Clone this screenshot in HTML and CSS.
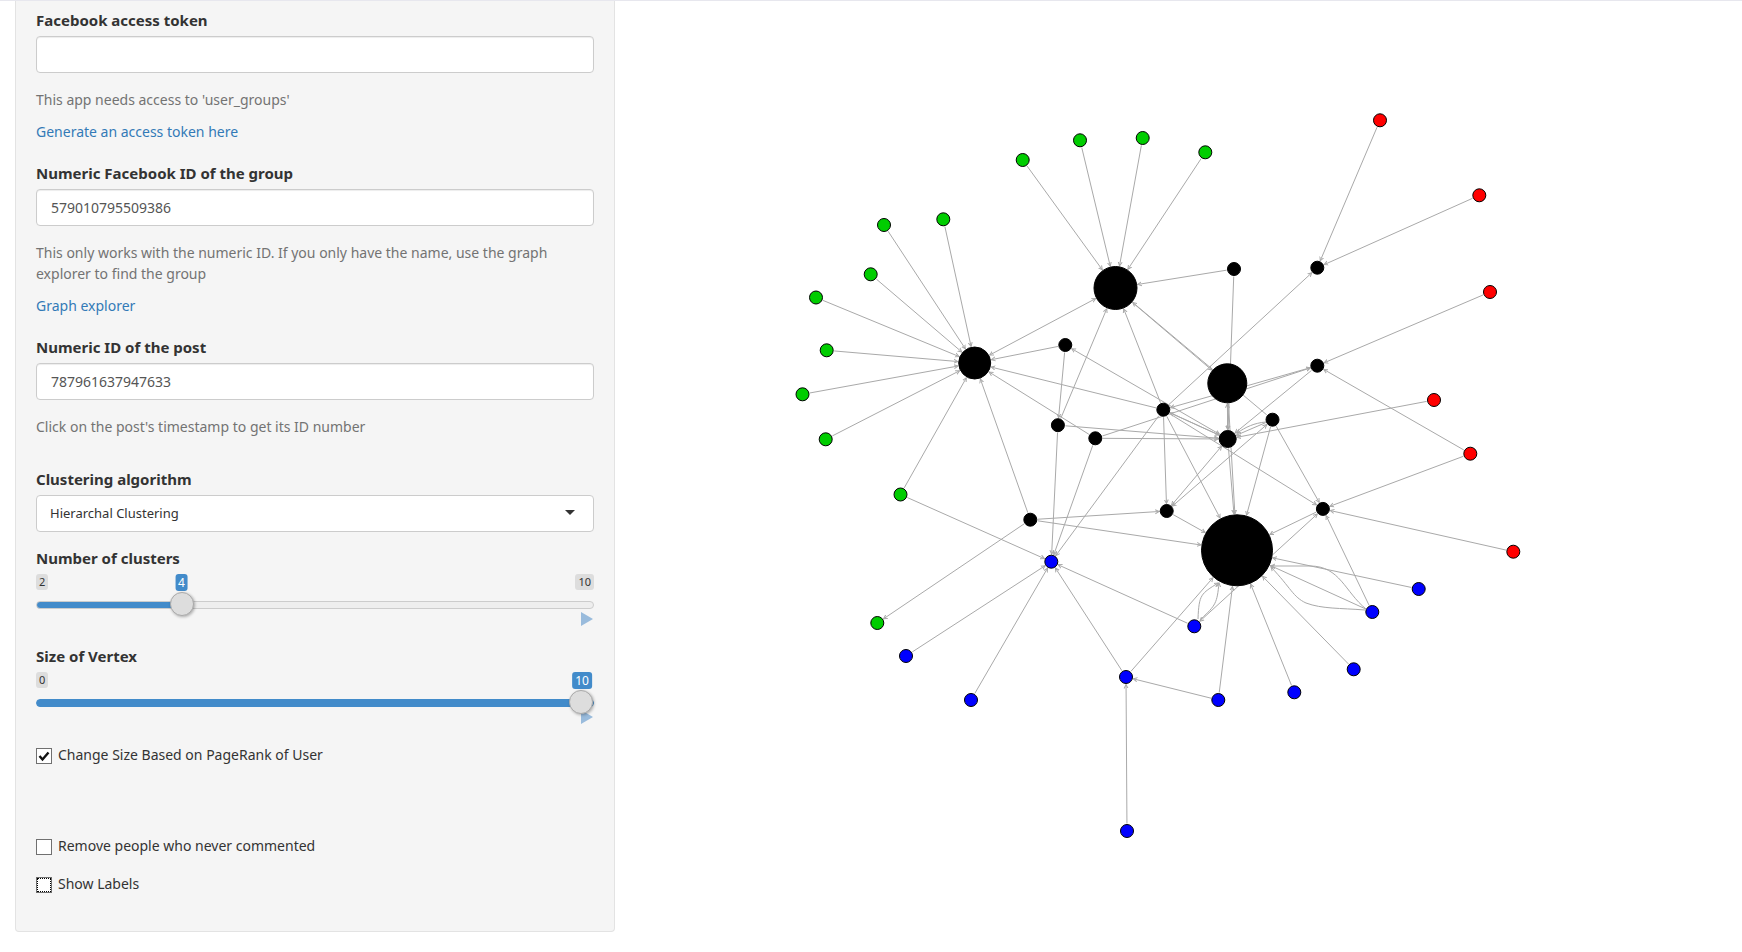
FILE: index.html
```html
<!DOCTYPE html>
<html lang="en">
<head>
<meta charset="utf-8">
<title>Facebook group network</title>
<link rel="stylesheet" href="styles.css">
</head>
<body>
<div class="layout">
  <div class="sidebar">
    <form class="panel">
      <div class="field">
        <label for="token">Facebook access token</label>
        <input class="textbox" type="text" id="token">
      </div>
      <p class="help">This app needs access to 'user_groups'</p>
      <p class="more"><a href="#token">Generate an access token here</a></p>

      <div class="field">
        <label for="group">Numeric Facebook ID of the group</label>
        <input class="textbox" type="text" id="group" value="579010795509386">
      </div>
      <p class="help">This only works with the numeric ID. If you only have the name, use the graph explorer to find the group</p>
      <p class="more"><a href="#group">Graph explorer</a></p>

      <div class="field">
        <label for="post">Numeric ID of the post</label>
        <input class="textbox" type="text" id="post" value="787961637947633">
      </div>
      <p class="help last">Click on the post's timestamp to get its ID number</p>

      <div class="field">
        <label for="algorithm">Clustering algorithm</label>
        <div class="select-wrap">
          <select class="textbox" id="algorithm"><option>Hierarchal Clustering</option></select>
        </div>
      </div>

      <div class="slider" style="--pos: 0.25">
        <label for="clusters">Number of clusters</label>
        <div class="scale"><span>2</span><output for="clusters">4</output><span>10</span></div>
        <input type="range" id="clusters" min="2" max="10" value="4">
        <button class="play" type="button" aria-label="Play"></button>
      </div>

      <div class="slider" style="--pos: 1">
        <label for="vertex">Size of Vertex</label>
        <div class="scale"><span>0</span><output for="vertex">10</output></div>
        <input type="range" id="vertex" min="0" max="10" value="10">
        <button class="play" type="button" aria-label="Play"></button>
      </div>

      <div class="checks">
        <label class="check wide"><input type="checkbox" checked> Change Size Based on PageRank of User</label>
        <label class="check"><input type="checkbox"> Remove people who never commented</label>
        <label class="check"><input class="focused" type="checkbox"> Show Labels</label>
      </div>
    </form>
  </div>
  <main class="plot">
    <svg id="graph" viewBox="630 1 1112 932" role="img" aria-label="Network graph">
      <defs>
        <marker id="arrow" viewBox="0 0 5 6" refX="4" refY="3" markerWidth="5" markerHeight="6" orient="auto-start-reverse" markerUnits="userSpaceOnUse">
          <path d="M0 1L4 3L0 5" fill="none" stroke="#a9a9a9"/>
        </marker>
      </defs>
    </svg>
  </main>
</div>
<script src="graph.js"></script>
</body>
</html>
```

FILE: styles.css
```css
* { box-sizing: border-box; }

body {
  margin: 0;
  border-top: 1px solid #e7e7ee;
  background: #fff;
  color: #333;
  font: 14px/21px "Noto Sans", "Open Sans", sans-serif;
}

input, select, button { font: inherit; }

.layout {
  display: grid;
  grid-template-columns: minmax(0, 630fr) minmax(0, 1112fr);
  align-items: start;
}

.sidebar { padding: 0 15px; }

.panel {
  padding: 9px 20px 20px;
  border: 1px solid #e3e3e3;
  border-top: 0;
  border-radius: 0 0 4px 4px;
  background: #f5f5f5;
}

.field label, .slider label {
  display: block;
  margin-bottom: 5px;
  font-size: 15px;
  font-weight: 700;
}

.textbox {
  display: block;
  width: 100%;
  height: 37px;
  padding: 6px 14px;
  border: 1px solid #ccc;
  border-radius: 4px;
  background: #fff;
  box-shadow: inset 0 1px 1px rgba(0, 0, 0, 0.075);
  color: #555;
}

.help { margin: 16px 0 11px; color: #737373; }
.help.last { margin-bottom: 32px; }
.more { margin: 0 0 21px; }
a { color: #337ab7; text-decoration: none; }

.select-wrap { position: relative; }
.select-wrap::after {
  content: "";
  position: absolute;
  top: 15px;
  right: 19px;
  border: 5px solid transparent;
  border-top-color: #333;
  border-bottom: 0;
  pointer-events: none;
}
select.textbox {
  appearance: none;
  padding: 6px 13px;
  box-shadow: none;
  color: #333;
  font-size: 13px;
}

.slider { position: relative; margin-top: 16px; height: 82px; }

.scale {
  --stop: calc(12px + (100% - 24px) * var(--pos));
  position: relative;
  display: flex;
  justify-content: space-between;
  height: 17px;
  font-size: 11px;
  line-height: 16px;
}
.scale span {
  height: 16px;
  padding: 0 3px;
  border-radius: 3px;
  background: #ddd;
}
.scale output {
  position: absolute;
  left: var(--stop);
  padding: 0 3px;
  border-radius: 3px;
  background: #428bca;
  color: #fff;
  font-size: 12px;
  line-height: 17px;
  transform: translateX(-50%);
}

input[type="range"] {
  --stop: calc(12px + (100% - 24px) * var(--pos));
  appearance: none;
  position: relative;
  z-index: 1;
  display: block;
  width: 100%;
  height: 28px;
  margin: 0;
  background: none;
}
input[type="range"]::-webkit-slider-runnable-track {
  height: 8px;
  border: 1px solid #ccc;
  border-radius: 5px;
  background: linear-gradient(#428bca, #428bca) 0 0 / var(--stop) 100% no-repeat border-box, #eee;
}
#vertex::-webkit-slider-runnable-track { border-color: #428bca; }
input[type="range"]::-webkit-slider-thumb {
  appearance: none;
  width: 24px;
  height: 24px;
  margin-top: -10px;
  border: 1px solid #aaa;
  border-radius: 50%;
  background: #ddd;
  box-shadow: 1px 1px 3px rgba(0, 0, 0, 0.3);
}

.play {
  position: absolute;
  right: 1px;
  bottom: 4px;
  width: 12px;
  height: 14px;
  padding: 0;
  border: 0;
  background: #99bbdc;
  clip-path: polygon(0 0, 100% 50%, 0 100%);
}

.check {
  display: flex;
  align-items: flex-start;
  gap: 6px;
  margin-bottom: 17px;
}
.check.wide { margin-bottom: 70px; }
.check input {
  appearance: none;
  width: 16px;
  height: 16px;
  margin: 4px 0 0;
  border: 1px solid #707070;
  background: #fff;
}
.check input:checked {
  background: #fff url("data:image/svg+xml,%3Csvg xmlns='http://www.w3.org/2000/svg' viewBox='0 0 14 14'%3E%3Cpath d='M2.500 7L5.500 10.500L11.500 3.500' fill='none' stroke='%23111' stroke-width='2.400'/%3E%3C/svg%3E");
}
.check input.focused {
  outline: 1px dotted #000;
  outline-offset: -2px;
}
.checks { padding-top: 16px; }

.plot svg { display: block; width: 100%; height: auto; }
.edge { fill: none; stroke: #a9a9a9; stroke-width: 1; }
.node { stroke: #000; stroke-width: 1; }
.black { fill: #000; }
.green { fill: #00cd00; }
.blue { fill: #00f; }
.red { fill: #f00; }
```

FILE: graph.js
```js
// Vertices: id -> [x, y, cluster colour, radius]
const nodes = {
  g1: [1022.7, 160, 'green'], g2: [1080, 140.3, 'green'], g3: [1142.7, 138, 'green'],
  g4: [1205.3, 152.3, 'green'], g5: [884, 225, 'green'], g6: [943.3, 219.3, 'green'],
  g7: [870.7, 274.3, 'green'], g8: [816, 297.5, 'green'], g9: [826.7, 350.3, 'green'],
  g10: [802.5, 394.3, 'green'], g11: [825.7, 439.3, 'green'], g12: [900.5, 494.5, 'green'],
  g13: [877.3, 623, 'green'],
  A: [1115.5, 288, 'black', 21.5], B: [974.7, 363, 'black', 16], C: [1065.3, 345, 'black'],
  D: [1163.3, 409.7, 'black'], E: [1234, 269, 'black'], F: [1317.3, 267.7, 'black'],
  H: [1227.3, 383.3, 'black', 19.5], I: [1317.3, 365.7, 'black'], J: [1272.5, 419.7, 'black'],
  K: [1227.7, 439, 'black', 8.5], L: [1095.3, 438.3, 'black'], M: [1057.9, 425.2, 'black'],
  N: [1030.3, 519.7, 'black'], O: [1166.7, 511, 'black'], P: [1322.9, 508.9, 'black'],
  Q: [1237, 550.3, 'black', 35.5],
  U: [1051.3, 561.7, 'blue'], V: [906, 656, 'blue'], W: [971, 700, 'blue'], X: [1126, 677, 'blue'],
  Y: [1194.3, 626.3, 'blue'], Z: [1218.3, 700, 'blue'], b1: [1294.3, 692.3, 'blue'],
  b2: [1353.7, 669.3, 'blue'], b3: [1372.3, 612, 'blue'], b4: [1418.7, 589, 'blue'],
  b5: [1127, 831, 'blue'],
  r1: [1380, 120.3, 'red'], r2: [1479.3, 195.3, 'red'], r3: [1490, 292, 'red'],
  r4: [1434, 400, 'red'], r5: [1470.3, 453.7, 'red'], r6: [1513.3, 551.7, 'red']
};

// "a>b" has one arrowhead, "a=b" has one at both ends
const edges = `g1>A g2>A g3>A g4>A g5>B g6>B g7>B g8>B g9>B g10>B g11>B g12>B g12>U
E>A B=A C>B C>M C=K M>A D>A A>H J>A E>K H>K K>H H>Q K>Q D>F D=I L>I I>K
J>K J=O O=K D>O D>Q D>U D>K K>D D>P D>B L>B L>K L>U M>K M>U N>B N>O N>Q N>g13
V>U W>U X>U Y>U b5>X Z>X X>Q Z>Q b1>Q b2>Q b3>Q b4>Q J>Q J>P O>Q P>Q P=Y b3>P
r6>P r5>P r5>I r3>I r4>K r1>F r2>F`.split(/\s+/);

// Repeated edges between the same two vertices bow outwards
const curves = [
  'M1366 609C1345 592 1340 566 1310 566L1271 566',
  'M1365 610C1340 608 1322 609 1306 603C1293 597 1291 588 1271 567',
  'M1198 619C1199 594 1201 594 1218 583',
  'M1201 619C1216 605 1217 603 1219 583',
  'M1266 422C1254 423 1246 427 1237 433'
];

const svg = document.getElementById('graph');

function add(tag, attrs) {
  const el = document.createElementNS('http://www.w3.org/2000/svg', tag);
  for (const name in attrs) el.setAttribute(name, attrs[name]);
  svg.append(el);
  return el;
}

for (const edge of edges) {
  const [from, to] = edge.split(/[>=]/);
  const [x1, y1, , r1 = 6.5] = nodes[from];
  const [x2, y2, , r2 = 6.5] = nodes[to];
  const length = Math.hypot(x2 - x1, y2 - y1);
  const ux = (x2 - x1) / length;
  const uy = (y2 - y1) / length;
  const line = add('line', {
    class: 'edge',
    x1: x1 + ux * (r1 + 1), y1: y1 + uy * (r1 + 1),
    x2: x2 - ux * (r2 + 1), y2: y2 - uy * (r2 + 1),
    'marker-end': 'url(#arrow)'
  });
  if (edge.includes('=')) line.setAttribute('marker-start', 'url(#arrow)');
}

for (const d of curves) add('path', { class: 'edge', d, 'marker-end': 'url(#arrow)' });

for (const [cx, cy, colour, r = 6.5] of Object.values(nodes)) {
  add('circle', { class: 'node ' + colour, cx, cy, r });
}

// Keep the value badge and the filled track in step with the thumb
for (const range of document.querySelectorAll('input[type="range"]')) {
  range.addEventListener('input', () => {
    const box = range.parentElement;
    box.style.setProperty('--pos', (range.value - range.min) / (range.max - range.min));
    box.querySelector('output').value = range.value;
  });
}
```
